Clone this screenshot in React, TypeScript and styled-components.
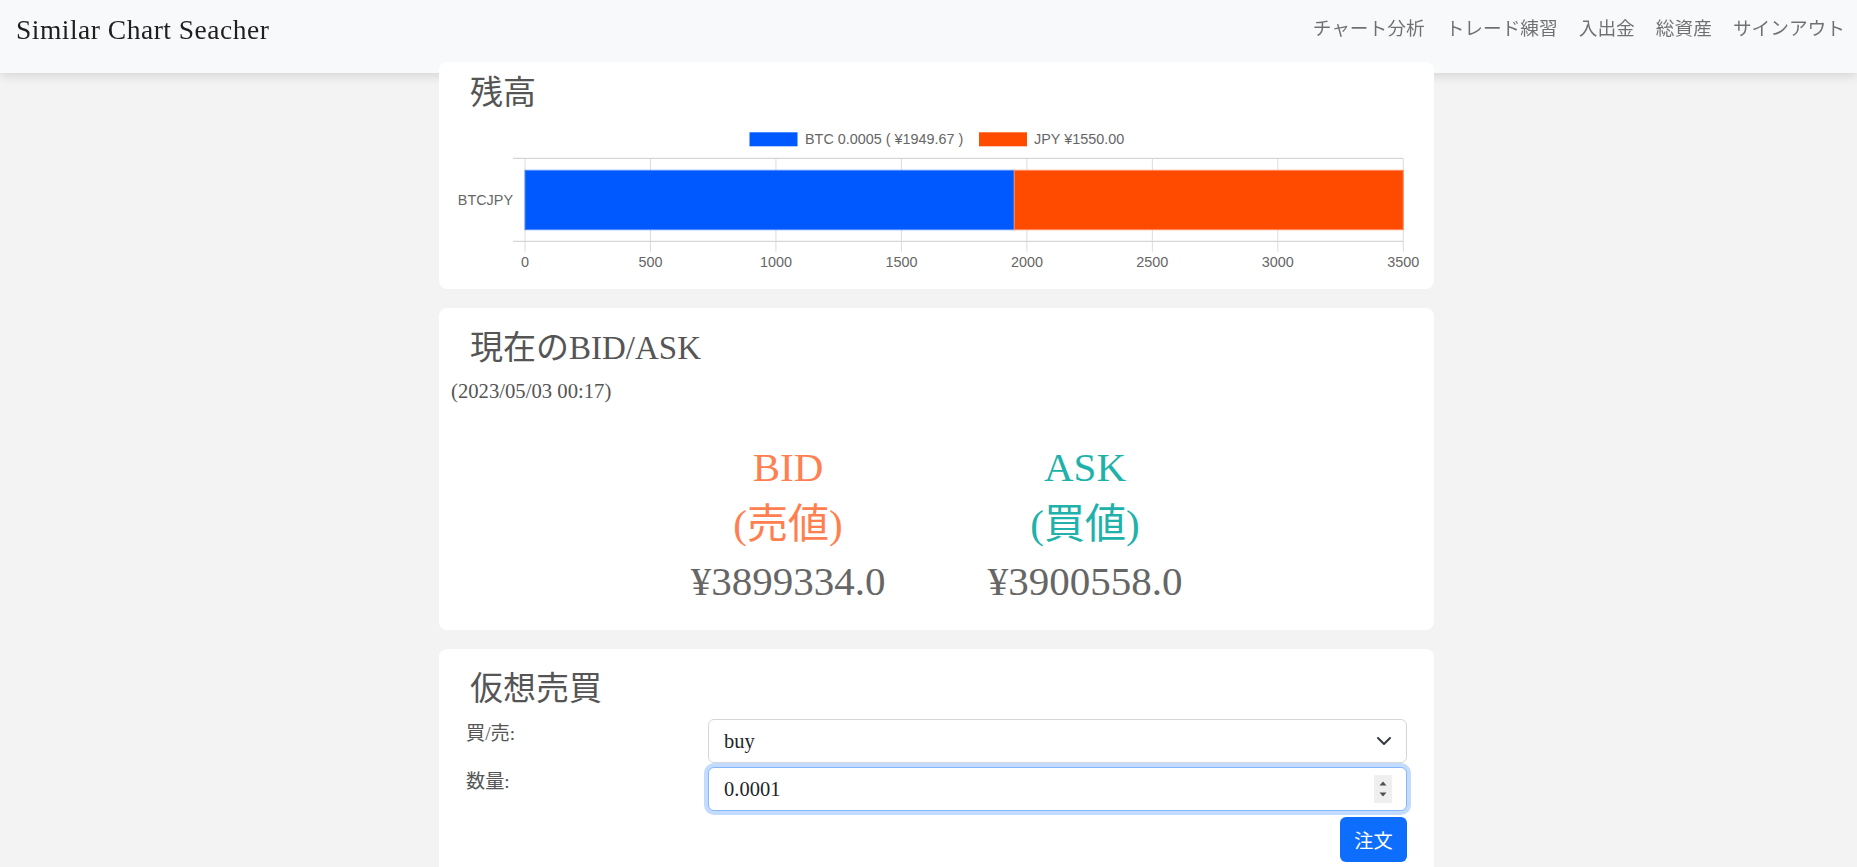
import styled, { createGlobalStyle } from 'styled-components';

const GlobalStyle = createGlobalStyle`
    html, body {
        margin: 0;
        padding: 0;
        background: #f3f3f3;
        font-family: "Liberation Serif", "Noto Sans CJK JP", serif;
        color: #555;
    }
`

const NavBar = styled.nav`
    position: fixed;
    top: 0;
    left: 0;
    right: 0;
    height: 73px;
    box-sizing: border-box;
    display: flex;
    align-items: flex-start;
    justify-content: space-between;
    padding: 14px 12px 0 16px;
    background: #f8f9fa;
    box-shadow: 0 3px 10px rgba(0, 0, 0, 0.12);
    z-index: 10;
`

const Brand = styled.div`
    font-size: 27.5px;
    line-height: 32px;
    letter-spacing: 0.5px;
    color: #1f1f1f;
`

const NavLinks = styled.div`
    display: flex;
    gap: 21px;
    margin-top: 1px;
`

const NavLink = styled.a`
    font-size: 18.7px;
    line-height: 28px;
    color: rgba(0, 0, 0, 0.55);
    text-decoration: none;
`

const Main = styled.main`
    display: flex;
    flex-direction: column;
    align-items: center;
    gap: 19px;
    padding: 62px 0 0 16px;
`

const Card = styled.section<{ $top?: number; $bottom?: number; $raised?: boolean }>`
    width: 995px;
    box-sizing: border-box;
    background: #fff;
    border-radius: 8px;
    padding: ${p => p.$top ?? 12}px 12px ${p => p.$bottom ?? 12}px;
    position: ${p => (p.$raised ? 'relative' : 'static')};
    z-index: ${p => (p.$raised ? 11 : 'auto')};
`

const Title = styled.h3`
    margin: 8px 0 0 19px;
    font-size: 33px;
    line-height: 40px;
    font-weight: 400;
    color: #555;
`

const ChartBox = styled.div`
    margin-top: 11px;
    height: 150px;
`

const Stamp = styled.div`
    margin-top: 11px;
    font-size: 20.7px;
    line-height: 24px;
    color: #555;
`

const QuoteRow = styled.div`
    display: flex;
    justify-content: center;
    margin-top: 40px;
`

const QuoteCol = styled.div`
    width: 297px;
    text-align: center;
`

const QuoteLine = styled.div<{ $color: string }>`
    font-size: 41px;
    line-height: 48px;
    margin-bottom: 9px;
    color: ${p => p.$color};
`

const FormArea = styled.div`
    margin-top: 10px;
    padding: 0 15px;
    display: flex;
    flex-direction: column;
    gap: 4px;
`

const FormRow = styled.div`
    display: grid;
    grid-template-columns: 242px 1fr;
`

const Label = styled.label`
    font-size: 19.2px;
    line-height: 29px;
    color: #555;
`

const Field = styled.div<{ $focus?: boolean }>`
    height: 44px;
    box-sizing: border-box;
    display: flex;
    align-items: center;
    justify-content: space-between;
    padding: 0 14px 0 15px;
    border: 1px solid ${p => (p.$focus ? '#86b7fe' : '#d3d6da')};
    border-radius: 6px;
    box-shadow: ${p => (p.$focus ? '0 0 0 4px rgba(13, 110, 253, 0.25)' : 'none')};
    font-size: 20.5px;
    color: #212529;
    background: #fff;
`

const Spinner = styled.span`
    width: 18px;
    height: 28px;
    background: #efefef;
    display: flex;
`

const ButtonRow = styled.div`
    display: flex;
    justify-content: flex-end;
    margin-top: 2px;
`

const OrderButton = styled.button`
    height: 45px;
    padding: 0 14.4px;
    border: none;
    border-radius: 6px;
    background: #0d6efd;
    color: #fff;
    font-family: inherit;
    font-size: 19.2px;
`

const AXIS_X0 = 74;
const PX_PER = 878.3 / 3500;
const TICKS = [0, 500, 1000, 1500, 2000, 2500, 3000, 3500];

const BalanceChart = () => {
    const btc = 1949.67;
    const jpy = 1550;
    const btcEnd = AXIS_X0 + btc * PX_PER;
    const jpyEnd = AXIS_X0 + (btc + jpy) * PX_PER;
    return (
        <svg width="971" height="150" style={{ display: 'block' }}>
            <g fontFamily="'Liberation Sans', Arial, sans-serif" fontSize="14.4" fill="#666">
                <rect x="298.5" y="8.3" width="48" height="14" fill="#0059ff" />
                <text x="354" y="20.3">BTC 0.0005 ( ¥1949.67 )</text>
                <rect x="528" y="8.3" width="48" height="14" fill="#ff4b00" />
                <text x="583" y="20.3">JPY ¥1550.00</text>

                {TICKS.map(t => {
                    const x = AXIS_X0 + t * PX_PER;
                    return (
                        <g key={t}>
                            <line x1={x} x2={x} y1="34.3" y2="127.7" stroke="#dcdcdc" strokeWidth="1" />
                            <text x={x} y="143" textAnchor="middle">{t}</text>
                        </g>
                    )
                })}
                <line x1="62" x2="952.3" y1="34.3" y2="34.3" stroke="#d6d6d6" strokeWidth="1.2" />
                <line x1="62" x2="952.3" y1="117.3" y2="117.3" stroke="#d6d6d6" strokeWidth="1.2" />

                <rect x={AXIS_X0} y="46.3" width={btcEnd - AXIS_X0} height="59.4" fill="#0059ff" stroke="#4d8aff" strokeWidth="1" />
                <rect x={btcEnd} y="46.3" width={jpyEnd - btcEnd} height="59.4" fill="#ff4b00" stroke="#ff8a5c" strokeWidth="1" />

                <text x="62" y="81" textAnchor="end">BTCJPY</text>
            </g>
        </svg>
    )
}

const App = () => {
    return (
        <>
            <GlobalStyle />
            <NavBar>
                <Brand>Similar Chart Seacher</Brand>
                <NavLinks>
                    <NavLink>チャート分析</NavLink>
                    <NavLink>トレード練習</NavLink>
                    <NavLink>入出金</NavLink>
                    <NavLink>総資産</NavLink>
                    <NavLink>サインアウト</NavLink>
                </NavLinks>
            </NavBar>
            <Main>
                <Card $raised $top={3} $bottom={15}>
                    <Title>残高</Title>
                    <ChartBox>
                        <BalanceChart />
                    </ChartBox>
                </Card>

                <Card $bottom={16}>
                    <Title>現在のBID/ASK</Title>
                    <Stamp>(2023/05/03 00:17)</Stamp>
                    <QuoteRow>
                        <QuoteCol>
                            <QuoteLine $color="coral">BID</QuoteLine>
                            <QuoteLine $color="coral">(売値)</QuoteLine>
                            <QuoteLine $color="#666">¥3899334.0</QuoteLine>
                        </QuoteCol>
                        <QuoteCol>
                            <QuoteLine $color="lightseagreen">ASK</QuoteLine>
                            <QuoteLine $color="lightseagreen">(買値)</QuoteLine>
                            <QuoteLine $color="#666">¥3900558.0</QuoteLine>
                        </QuoteCol>
                    </QuoteRow>
                </Card>

                <Card $bottom={30}>
                    <Title>仮想売買</Title>
                    <FormArea>
                        <FormRow>
                            <Label>買/売:</Label>
                            <Field>
                                <span>buy</span>
                                <svg width="16" height="16" viewBox="0 0 16 16">
                                    <path d="M2 5l6 6 6-6" fill="none" stroke="#343a40" strokeWidth="2" strokeLinecap="round" strokeLinejoin="round" />
                                </svg>
                            </Field>
                        </FormRow>
                        <FormRow>
                            <Label>数量:</Label>
                            <Field $focus>
                                <span>0.0001</span>
                                <Spinner>
                                    <svg width="18" height="28" viewBox="0 0 18 28">
                                        <path d="M5.5 10.5L9 6.5l3.5 4z" fill="#505050" />
                                        <path d="M5.5 17.5h7L9 21.5z" fill="#505050" />
                                    </svg>
                                </Spinner>
                            </Field>
                        </FormRow>
                        <ButtonRow>
                            <OrderButton>注文</OrderButton>
                        </ButtonRow>
                    </FormArea>
                </Card>
            </Main>
        </>
    )
}

export default App;
